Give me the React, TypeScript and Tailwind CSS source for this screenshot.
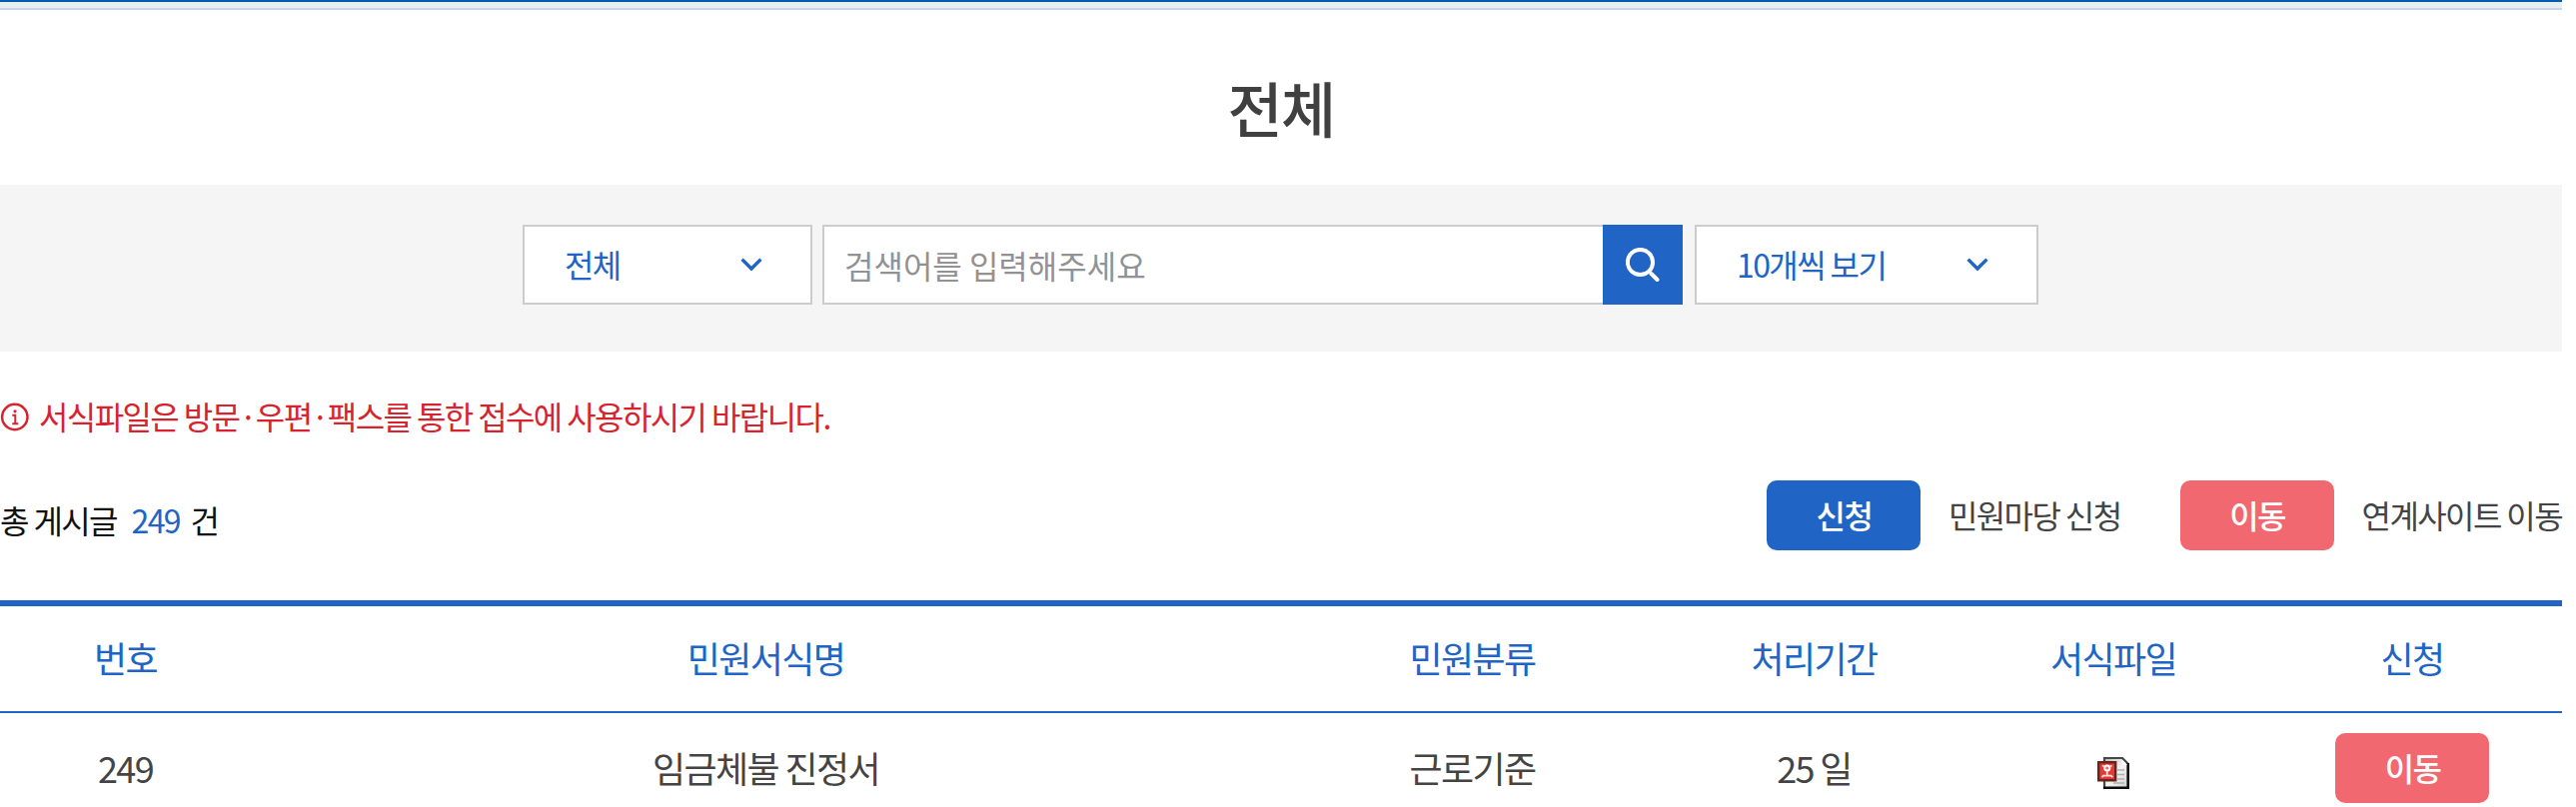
import type { ReactNode } from 'react';
import { clsx } from 'clsx';

const columns = [
  { label: '번호', width: 'w-[251px]' },
  { label: '민원서식명', width: 'w-[1031px]' },
  { label: '민원분류', width: 'w-[383px]' },
  { label: '처리기간', width: 'w-[301px]' },
  { label: '서식파일', width: 'w-[298px]' },
  { label: '신청', width: 'w-[300px]' },
];

const rows = [{ no: 249, name: '임금체불 진정서', category: '근로기준', period: '25 일' }];

function ChevronIcon() {
  return (
    <svg className="h-[14px] w-[22px]" viewBox="0 0 22 14" fill="none" stroke="#2064c5" strokeWidth="3.4">
      <path d="M1.6 1.6 11 11 20.4 1.6" />
    </svg>
  );
}

function SearchIcon() {
  return (
    <svg className="h-[34px] w-[34px]" viewBox="0 0 34 34" fill="none" stroke="#fff">
      <circle cx="14.5" cy="14.5" r="12.6" strokeWidth="4" />
      <path d="m25.5 26 6 6" strokeWidth="4" strokeLinecap="round" />
    </svg>
  );
}

function InfoIcon() {
  return (
    <svg className="h-[29px] w-[29px]" viewBox="0 0 29 29" fill="none" stroke="#d8232f">
      <circle cx="14.8" cy="14.5" r="12.7" strokeWidth="2.5" />
      <path d="M12.3 12.8h3v8.4M12.3 21.2h6" strokeWidth="2" />
      <circle cx="15" cy="8.8" r="1.6" fill="#d8232f" stroke="none" />
    </svg>
  );
}

function FileIcon() {
  return (
    <svg className="h-8 w-8" viewBox="0 0 32 32" fill="none">
      <defs>
        <linearGradient id="paper" x1="0" y1="0" x2="1" y2="1">
          <stop offset="0" stopColor="#b9b9b9" />
          <stop offset="0.5" stopColor="#f4f4f4" />
          <stop offset="1" stopColor="#cfcfcf" />
        </linearGradient>
      </defs>
      <path d="M7 1h19l5 5v25H7z" fill="url(#paper)" />
      <path d="M7 31V1h18l5.5 5.5" stroke="#484848" strokeWidth="2.2" />
      <path d="M6 30.7h24.7V6" stroke="#0c0c0c" strokeWidth="2.6" />
      <path d="M24.5 2.5V8H30z" fill="#fff" />
      <path d="M20 13h7M20 17.5h7M20 22h7M16 26h11" stroke="#b0b0b0" strokeWidth="1.6" />
      <path d="M1.2 5.2h17v18h-17z" fill="#e33a36" stroke="#6b2218" strokeWidth="2.4" />
      <circle cx="9.8" cy="11" r="2.6" fill="#f26a6a" stroke="#fff" strokeWidth="2" />
      <path d="M9.8 14v4M5 8.5l2.2 1M14.6 8.5l-2.2 1" stroke="#ffd5d5" strokeWidth="1.8" />
      <path d="M4.5 20.2l1.6-1.6h7.6l1.6 1.6" stroke="#ffdede" strokeWidth="1.8" />
    </svg>
  );
}

function Button({ color, children }: { color: 'blue' | 'pink'; children: ReactNode }) {
  return (
    <button
      type="button"
      className={clsx(
        'flex h-[70px] w-[154px] items-center justify-center rounded-[10px] pb-0.5 pl-px text-[32px] font-medium text-white',
        color === 'blue' ? 'bg-[#2064c5]' : 'bg-[#f26870]',
      )}
    >
      {children}
    </button>
  );
}

export default function App() {
  return (
    <div className="h-[808px] w-full overflow-hidden bg-white font-['Noto_Sans_CJK_KR',sans-serif] tracking-[-1.6px] text-[#444]">
      <div className="w-[2564px]">
        {/* Bottom edge of the navigation */}
        <div className="h-[10px] border-t-2 border-b-2 border-t-[#005fad] border-b-[#c8d6e6] bg-[#e8eff3]" />

        <h1 className="flex h-[175px] items-center justify-center pt-[18px] text-[60px] leading-none font-medium text-[#404040]">
          전체
        </h1>

        {/* Search */}
        <form className="flex h-[167px] bg-[#f5f5f5] pt-10 pl-[523px] text-[32px] text-[#2064c5]">
          <div className="flex h-20 w-[290px] items-center justify-between border-2 border-[#ccc] bg-white pr-12 pl-10">
            <span className="pb-0.5">전체</span>
            <ChevronIcon />
          </div>
          <div className="ml-[10px] flex h-20 w-[781px] items-center border-2 border-r-0 border-[#ccc] bg-white pl-5 tracking-normal text-[#929292]">
            검색어를 입력해주세요
          </div>
          <button type="button" className="flex size-20 items-center justify-center bg-[#2064c5]">
            <SearchIcon />
          </button>
          <div className="ml-3 flex h-20 w-[344px] items-center justify-between border-2 border-[#ccc] bg-white pr-12 pl-10">
            <span className="pb-0.5">10개씩 보기</span>
            <ChevronIcon />
          </div>
        </form>

        <p className="mt-[41px] flex h-12 items-center gap-[10px] text-[32px] text-[#d8232f]">
          <InfoIcon />
          <span className="pb-[3px]">서식파일은 방문·우편·팩스를 통한 접수에 사용하시기 바랍니다.</span>
        </p>

        <div className="mt-10 flex h-[70px] justify-between text-[32px]">
          <p className="pt-[15px] leading-[48px] text-[#111]">
            총 게시글 <span className="mr-[5px] ml-[9px] text-[#2064c5]">249</span> 건
          </p>
          <div className="flex items-center">
            <Button color="blue">신청</Button>
            <span className="ml-[28px] pb-0.5">민원마당 신청</span>
            <span className="ml-[59px]">
              <Button color="pink">이동</Button>
            </span>
            <span className="ml-[28px] pb-0.5">연계사이트 이동</span>
          </div>
        </div>

        <table className="mt-[50px] w-[2564px] table-fixed border-separate border-spacing-0 text-center text-[36px]">
          <thead className="text-[#2064c5]">
            <tr>
              {columns.map((col) => (
                <th
                  key={col.label}
                  className={clsx(col.width, 'h-[113px] border-t-[6px] border-b-2 border-[#2064c5] p-0 pb-1 font-normal')}
                >
                  {col.label}
                </th>
              ))}
            </tr>
          </thead>
          <tbody>
            {rows.map((row) => (
              <tr key={row.no} className="h-[110px]">
                <td className="p-0 pb-0.5">{row.no}</td>
                <td className="p-0 pb-0.5">{row.name}</td>
                <td className="p-0 pb-0.5">{row.category}</td>
                <td className="p-0 pb-0.5">{row.period}</td>
                <td className="p-0 pt-[10px]">
                  <div className="flex justify-center">
                    <FileIcon />
                  </div>
                </td>
                <td className="p-0">
                  <div className="flex justify-center">
                    <Button color="pink">이동</Button>
                  </div>
                </td>
              </tr>
            ))}
          </tbody>
        </table>
      </div>
    </div>
  );
}
